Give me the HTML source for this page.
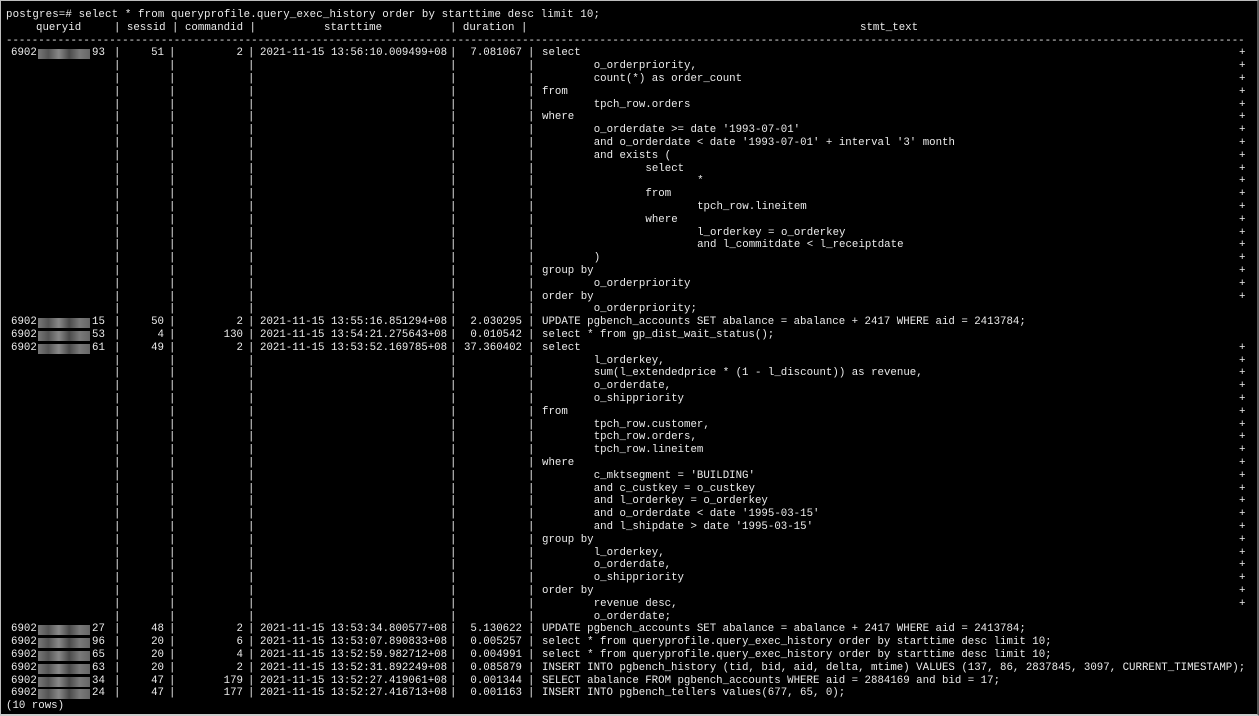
<!DOCTYPE html>
<html><head><meta charset="utf-8">
<style>
html,body{margin:0;padding:0;background:#000;}
#t{position:relative;width:1259px;height:716px;background:#000;overflow:hidden;box-sizing:border-box;border:1px solid #bdbdbd;border-right:2px solid #555;border-bottom:2px solid #ccc;font-family:"Liberation Mono",monospace;font-size:10.75px;color:#ececec;}
.l{position:absolute;left:0;height:13px;line-height:13px;white-space:pre;width:1259px;}
.l span{position:absolute;top:0;}
.r{text-align:right;}
.blur{position:absolute;top:2px;height:10px;background:linear-gradient(90deg,#777,#555 20%,#888 40%,#4a4a4a 60%,#7a7a7a 80%,#666);}
</style></head><body><div id="t"></div>
<script>
var T=document.getElementById('t');
var LH=12.8, Y0=8;
function line(i,parts){var d=document.createElement('div');d.className='l';d.style.top=(Y0+i*LH)+'px';d.innerHTML=parts;T.appendChild(d);}
function esc(s){return s.replace(/&/g,'&amp;').replace(/</g,'&lt;').replace(/>/g,'&gt;');}
function bars(){return '<span style="left:113px">|</span><span style="left:168px">|</span><span style="left:247px">|</span><span style="left:449px">|</span><span style="left:527px">|</span>';}
line(0,'<span style="left:5px;letter-spacing:0.15px">postgres=# select * from queryprofile.query_exec_history order by starttime desc limit 10;</span>');
line(1,'<span style="left:35px">queryid</span><span style="left:113px">| sessid | commandid |</span><span style="left:323px">starttime</span><span style="left:449px">| duration |</span><span style="left:859px">stmt_text</span>');
line(2,'<span style="left:5px;width:1240px;overflow:hidden">'+'-'.repeat(400)+'</span>');
function row(i,suf,sess,cmd,st,dur,txt){
 line(i,'<span style="left:10px">6902</span><div class="blur" style="left:37px;width:52px"></div><span style="left:91px">'+suf+'</span>'+bars()+
 '<span class="r" style="left:120px;width:43px">'+sess+'</span><span class="r" style="left:175px;width:67px">'+cmd+'</span>'+
 '<span style="left:259px">'+st+'</span><span class="r" style="left:455px;width:66px">'+dur+'</span><span style="left:541px">'+esc(txt)+'</span>');
}
function cont(i,ind,txt,plus){
 line(i,bars()+'<span style="left:'+(541+ind*51.7)+'px">'+esc(txt)+'</span>'+(plus?'<span style="left:1238px">+</span>':''));
}
var r1=[[0,'select'],[1,'o_orderpriority,'],[1,'count(*) as order_count'],[0,'from'],[1,'tpch_row.orders'],[0,'where'],[1,"o_orderdate >= date '1993-07-01'"],[1,"and o_orderdate < date '1993-07-01' + interval '3' month"],[1,'and exists ('],[2,'select'],[3,'*'],[2,'from'],[3,'tpch_row.lineitem'],[2,'where'],[3,'l_orderkey = o_orderkey'],[3,'and l_commitdate < l_receiptdate'],[1,')'],[0,'group by'],[1,'o_orderpriority'],[0,'order by'],[1,'o_orderpriority;']];
row(3,'93','51','2','2021-11-15 13:56:10.009499+08','7.081067','select');
line(3,'<span style="left:1238px">+</span>');
for(var k=1;k<r1.length;k++)cont(3+k,r1[k][0],r1[k][1],k<r1.length-1);
row(24,'15','50','2','2021-11-15 13:55:16.851294+08','2.030295','UPDATE pgbench_accounts SET abalance = abalance + 2417 WHERE aid = 2413784;');
row(25,'53','4','130','2021-11-15 13:54:21.275643+08','0.010542','select * from gp_dist_wait_status();');
var r4=[[0,'select'],[1,'l_orderkey,'],[1,'sum(l_extendedprice * (1 - l_discount)) as revenue,'],[1,'o_orderdate,'],[1,'o_shippriority'],[0,'from'],[1,'tpch_row.customer,'],[1,'tpch_row.orders,'],[1,'tpch_row.lineitem'],[0,'where'],[1,"c_mktsegment = 'BUILDING'"],[1,'and c_custkey = o_custkey'],[1,'and l_orderkey = o_orderkey'],[1,"and o_orderdate < date '1995-03-15'"],[1,"and l_shipdate > date '1995-03-15'"],[0,'group by'],[1,'l_orderkey,'],[1,'o_orderdate,'],[1,'o_shippriority'],[0,'order by'],[1,'revenue desc,'],[1,'o_orderdate;']];
row(26,'61','49','2','2021-11-15 13:53:52.169785+08','37.360402','select');
line(26,'<span style="left:1238px">+</span>');
for(var k=1;k<r4.length;k++)cont(26+k,r4[k][0],r4[k][1],k<r4.length-1);
row(48,'27','48','2','2021-11-15 13:53:34.800577+08','5.130622','UPDATE pgbench_accounts SET abalance = abalance + 2417 WHERE aid = 2413784;');
row(49,'96','20','6','2021-11-15 13:53:07.890833+08','0.005257','select * from queryprofile.query_exec_history order by starttime desc limit 10;');
row(50,'65','20','4','2021-11-15 13:52:59.982712+08','0.004991','select * from queryprofile.query_exec_history order by starttime desc limit 10;');
row(51,'63','20','2','2021-11-15 13:52:31.892249+08','0.085879','INSERT INTO pgbench_history (tid, bid, aid, delta, mtime) VALUES (137, 86, 2837845, 3097, CURRENT_TIMESTAMP);');
row(52,'34','47','179','2021-11-15 13:52:27.419061+08','0.001344','SELECT abalance FROM pgbench_accounts WHERE aid = 2884169 and bid = 17;');
row(53,'24','47','177','2021-11-15 13:52:27.416713+08','0.001163','INSERT INTO pgbench_tellers values(677, 65, 0);');
line(54,'<span style="left:5px">(10 rows)</span>');
</script></body></html>
